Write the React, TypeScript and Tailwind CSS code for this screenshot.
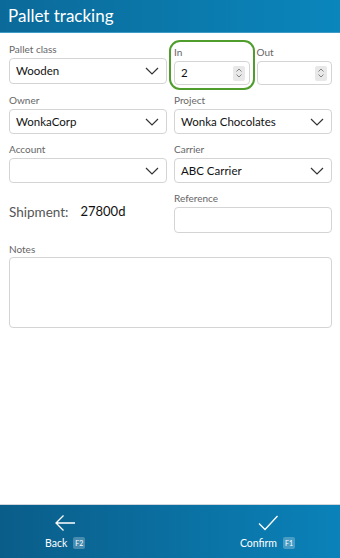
import React from 'react';

const font = { fontFamily: '"Segoe UI", Lato, "Noto Sans", sans-serif' };

function Chevron() {
  return (
    <svg width="14" height="8" viewBox="0 0 14 8" fill="none" className="shrink-0">
      <path d="M1 1l6 6 6-6" stroke="#333" strokeWidth="1.2" />
    </svg>
  );
}

function Spinner() {
  return (
    <div className="flex h-[15px] w-[12px] flex-col items-center justify-center gap-[2px] rounded-[2px] bg-[#e8e8e8]">
      <svg width="6" height="4" viewBox="0 0 6 4" fill="none">
        <path d="M0.5 3.5L3 1l2.5 2.5" stroke="#777" strokeWidth="0.9" />
      </svg>
      <svg width="6" height="4" viewBox="0 0 6 4" fill="none">
        <path d="M0.5 0.5L3 3l2.5-2.5" stroke="#777" strokeWidth="0.9" />
      </svg>
    </div>
  );
}

function Label({ children }: { children: React.ReactNode }) {
  return <div className="h-[14px] text-[10px] leading-[14px] text-[#666]">{children}</div>;
}

function Select({ label, value, tall }: { label: string; value?: string; tall?: boolean }) {
  return (
    <div className="flex flex-col">
      <Label>{label}</Label>
      <div
        className={
          'mt-[2px] flex items-center justify-between rounded-[4px] border border-[#d4d4d4] bg-white pl-[6px] pr-[7px] ' +
          (tall ? 'h-[26px]' : 'h-[25px]')
        }
      >
        <span className="text-[11.5px] text-[#111]">{value}</span>
        <Chevron />
      </div>
    </div>
  );
}

function NumberField({ label, value, focused }: { label: string; value?: string; focused?: boolean }) {
  return (
    <div
      className={
        'flex flex-1 flex-col ' +
        (focused ? 'rounded-[6px] outline-2 outline-offset-[3px] outline-[#4e9d2d]' : '')
      }
    >
      <Label>{label}</Label>
      <div className="mt-[2px] flex h-[24px] items-center justify-between rounded-[4px] border border-[#d4d4d4] bg-white pl-[6px] pr-[4px]">
        <span className="text-[11.5px] text-[#111]">{value}</span>
        <Spinner />
      </div>
    </div>
  );
}

export default function App() {
  return (
    <div className="flex h-[558px] w-[340px] flex-col bg-white" style={font}>
      <header className="h-[33px] shrink-0 border-b border-[#3d9bc6] bg-gradient-to-r from-[#0b6a99] to-[#0a86bc] pl-[8px]">
        <h1 className="text-[17px] leading-[32px] text-white">Pallet tracking</h1>
      </header>

      <main className="flex flex-1 flex-col pl-[9px] pr-[8px] pt-[9px]">
        <div className="grid grid-cols-2 gap-x-[7px]">
          <Select label="Pallet class" value="Wooden" tall />
          <div className="flex gap-[7px] pt-[3px]">
            <NumberField label="In" value="2" focused />
            <NumberField label="Out" />
          </div>
        </div>

        <div className="mt-[8px] grid grid-cols-2 gap-x-[7px]">
          <Select label="Owner" value="WonkaCorp" />
          <Select label="Project" value="Wonka Chocolates" />
        </div>

        <div className="mt-[8px] grid grid-cols-2 gap-x-[7px]">
          <Select label="Account" />
          <Select label="Carrier" value="ABC Carrier" />
        </div>

        <div className="mt-[8px] grid grid-cols-2 gap-x-[7px]">
          <div className="flex items-center">
            <span className="text-[13.5px] text-[#555]">Shipment:</span>
            <span className="ml-[12px] text-[13px] text-[#111]">27800d</span>
          </div>
          <div className="flex flex-col">
            <Label>Reference</Label>
            <div className="mt-[2px] h-[26px] rounded-[4px] border border-[#d4d4d4] bg-white" />
          </div>
        </div>

        <div className="mt-[9px] flex flex-col">
          <Label>Notes</Label>
          <div className="mt-[1px] h-[71px] rounded-[4px] border border-[#d4d4d4] bg-white" />
        </div>
      </main>

      <footer className="flex h-[54px] shrink-0 items-stretch justify-between border-t border-[#d0d6dc] bg-gradient-to-r from-[#0a5d89] to-[#0a82b9] px-[45px] text-white">
        <div className="flex flex-col items-center pt-[9px]">
          <svg width="22" height="18" viewBox="0 0 22 18" fill="none">
            <path d="M21 9H2M9.5 1.5L2 9l7.5 7.5" stroke="white" strokeWidth="1.3" />
          </svg>
          <div className="mt-[4px] flex items-center gap-[6px]">
            <span className="text-[10.5px] leading-[14px]">Back</span>
            <span className="flex h-[12px] w-[12px] items-center justify-center rounded-[2px] bg-white/25 text-[7px] leading-none">F2</span>
          </div>
        </div>
        <div className="flex flex-col items-center pt-[9px]">
          <svg width="22" height="18" viewBox="0 0 22 18" fill="none" className="ml-[2px]">
            <path d="M2 9.5l6 6L20.5 2" stroke="white" strokeWidth="1.3" />
          </svg>
          <div className="mt-[4px] flex items-center gap-[6px]">
            <span className="text-[10.5px] leading-[14px]">Confirm</span>
            <span className="flex h-[12px] w-[12px] items-center justify-center rounded-[2px] bg-white/25 text-[7px] leading-none">F1</span>
          </div>
        </div>
      </footer>
    </div>
  );
}
